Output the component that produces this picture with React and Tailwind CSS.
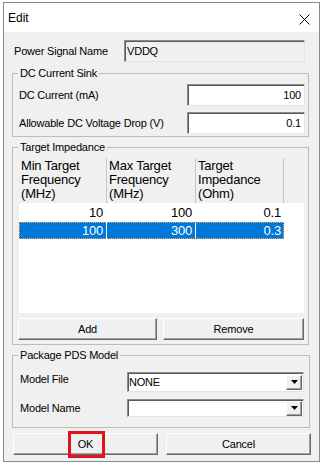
import React from 'react';

const sunken = "border border-t-[#8c8c8c] border-l-[#8c8c8c] border-b-[#e3e3e3] border-r-[#e3e3e3] shadow-[inset_1px_1px_0_#5a5a5a]";
const raised = "bg-[#f0f0f0] border border-t-white border-l-white border-b-[#696969] border-r-[#696969] shadow-[inset_-1px_-1px_0_#a0a0a0]";

const Combo = ({ value }) => (
  <div className={`w-[177px] h-full bg-white flex items-center justify-between pl-[1px] pr-[1px] ${sunken}`}>
    <span>{value}</span>
    <div className={`w-[16px] h-[15px] flex items-center justify-center ${raised}`}>
      <svg width="7" height="4" viewBox="0 0 7 4">
        <path d="M0 0h7L3.5 4z" fill="#000" />
      </svg>
    </div>
  </div>
);

export default function App() {
  const cols = [
    { w: 'w-[88px]', lines: ['Min Target', 'Frequency', '(MHz)'] },
    { w: 'w-[89px]', lines: ['Max Target', 'Frequency', '(MHz)'] },
    { w: 'w-[88px]', lines: ['Target', 'Impedance', '(Ohm)'] }
  ];
  const rows = [
    ['10', '100', '0.1'],
    ['100', '300', '0.3']
  ];

  return (
    <div className="w-[327px] h-[468px] bg-white pt-[2px] pl-[3px] font-['Liberation_Sans',Arial,sans-serif] text-[11px] tracking-[-0.2px] text-black">
      <div className="w-[317px] h-[460px] border border-[#8a8a8a] flex flex-col bg-[#f0f0f0]">

        {/* Title bar */}
        <div className="h-[29px] shrink-0 bg-white flex items-center justify-between pl-[4px] pr-[9px] pt-[1px]">
          <span className="text-[12px] tracking-normal">Edit</span>
          <svg width="11" height="11" viewBox="0 0 11 11" className="mt-[2px]">
            <path d="M0.5 0.5L10.5 10.5M10.5 0.5L0.5 10.5" stroke="#000" strokeWidth="1" />
          </svg>
        </div>

        {/* Power signal */}
        <div className="flex items-center mt-[8px] h-[22px]">
          <span className="w-[120px] pl-[10px]">Power Signal Name</span>
          <div className={`w-[181px] h-full bg-[#f0f0f0] flex items-center pl-[2px] ${sunken}`}>VDDQ</div>
        </div>

        {/* DC Current Sink */}
        <fieldset className="ml-[8px] w-[297px] mt-[4px] border border-[#bcbcbc] pb-[2px]">
          <legend className="ml-[5px] px-[2px] leading-[14px]">DC Current Sink</legend>
          <div className="flex items-center mt-[4px] h-[22px]">
            <span className="w-[174px] pl-[6px]">DC Current (mA)</span>
            <div className={`w-[118px] h-full bg-white flex items-center justify-end pr-[3px] ${sunken}`}>100</div>
          </div>
          <div className="flex items-center mt-[6px] h-[22px]">
            <span className="w-[174px] pl-[6px]">Allowable DC Voltage Drop (V)</span>
            <div className={`w-[118px] h-full bg-white flex items-center justify-end pr-[3px] ${sunken}`}>0.1</div>
          </div>
        </fieldset>

        {/* Target Impedance */}
        <fieldset className="ml-[8px] w-[297px] mt-[3px] border border-[#bcbcbc] pb-[4px]">
          <legend className="ml-[5px] px-[2px] leading-[14px]">Target Impedance</legend>
          <div className="ml-[6px] mt-[4px] w-[285px] h-[155px] bg-white flex flex-col text-[13px] tracking-[-0.2px]">
            <div className="h-[45px] shrink-0 flex bg-[#f0f0f0]">
              {cols.map((c, i) => (
                <div key={i} className={`${c.w} border-r border-[#c6c6c6] pl-[2px] pt-[1px] leading-[14px]`}>
                  {c.lines.map((l, j) => <div key={j}>{l}</div>)}
                </div>
              ))}
            </div>
            {rows.map((r, i) => {
              const sel = i === 1;
              return (
                <div key={i} className={`flex ${sel ? 'h-[17px]' : 'h-[19px]'}`}>
                  <div className={`flex ${sel ? 'bg-[#0078d7] text-white outline outline-1 outline-dotted outline-[#f0a868] -outline-offset-1' : ''}`}>
                    {r.map((v, j) => (
                      <div key={j} className={`${cols[j].w} flex items-center justify-end pr-[3px] ${j < 2 ? 'border-r border-white' : ''}`}>{v}</div>
                    ))}
                  </div>
                </div>
              );
            })}
          </div>
          <div className="flex mt-[5px] ml-[5px] gap-[6px]">
            <button className={`w-[139px] h-[22px] ${raised}`}>Add</button>
            <button className={`w-[141px] h-[22px] ${raised}`}>Remove</button>
          </div>
        </fieldset>

        {/* Package PDS Model */}
        <fieldset className="ml-[8px] w-[298px] mt-[3px] border border-[#bcbcbc] pb-[10px]">
          <legend className="ml-[5px] px-[2px] leading-[14px]">Package PDS Model</legend>
          <div className="flex items-center mt-[10px] h-[20px]">
            <span className="w-[114px] pl-[7px] pb-[5px]">Model File</span>
            <Combo value="NONE" />
          </div>
          <div className="flex items-center mt-[7px] h-[18px]">
            <span className="w-[114px] pl-[7px]">Model Name</span>
            <Combo value="" />
          </div>
        </fieldset>

        {/* Dialog buttons */}
        <div className="flex mt-[5px] ml-[9px] gap-[8px]">
          <button className={`relative w-[145px] h-[22px] ${raised}`}>
            OK
            <span className="absolute left-[54px] top-[-3px] w-[37px] h-[27px] border-[3px] border-[#e3101e]" />
          </button>
          <button className={`w-[145px] h-[22px] ${raised}`}>Cancel</button>
        </div>
      </div>
    </div>
  );
}
